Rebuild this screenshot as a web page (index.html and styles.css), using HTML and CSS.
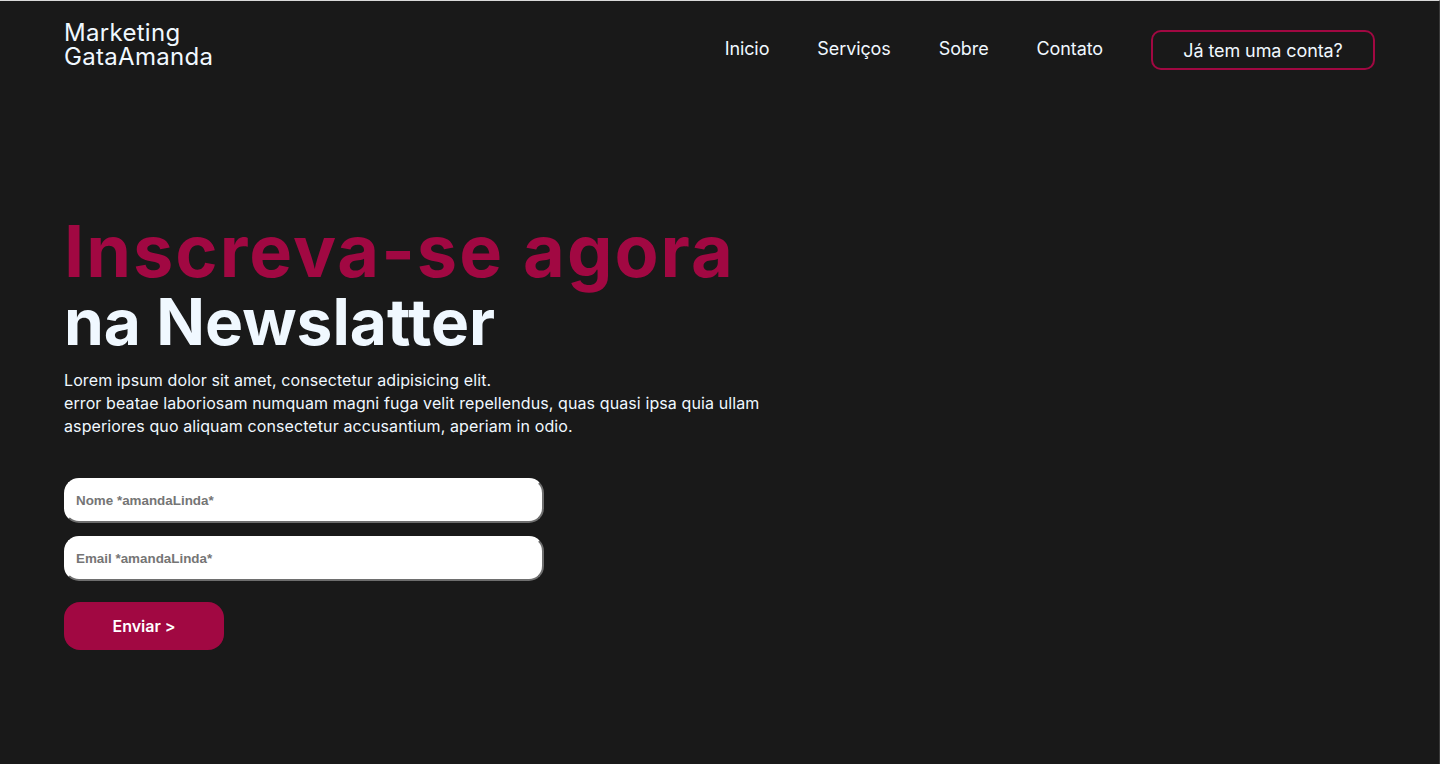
FILE: index.html
```html
<!DOCTYPE html>
<html lang="pt-BR">
<head>
<meta charset="utf-8">
<title>Marketing GataAmanda</title>
<link rel="stylesheet" href="styles.css">
</head>
<body>
<div class="page">
  <header class="header">
    <div class="logo">Marketing<br>GataAmanda</div>
    <nav class="nav">
      <a href="#" class="nav-link">Inicio</a>
      <a href="#" class="nav-link">Serviços</a>
      <a href="#" class="nav-link">Sobre</a>
      <a href="#" class="nav-link">Contato</a>
      <a href="#" class="nav-btn">Já tem uma conta?</a>
    </nav>
  </header>
  <main class="hero">
    <h1 class="title"><span class="title-accent">Inscreva-se agora</span><span class="title-light">na Newslatter</span></h1>
    <p class="lead">Lorem ipsum dolor sit amet, consectetur adipisicing elit.<br>error beatae laboriosam numquam magni fuga velit repellendus, quas quasi ipsa quia ullam asperiores quo aliquam consectetur accusantium, aperiam in odio.</p>
    <form class="form">
      <input class="field" type="text" placeholder="Nome *amandaLinda*">
      <input class="field" type="email" placeholder="Email *amandaLinda*">
      <button class="submit" type="button">Enviar &gt;</button>
    </form>
  </main>
</div>
</body>
</html>
```

FILE: styles.css
```css
* { box-sizing: border-box; }
html, body { margin: 0; padding: 0; }
body {
  background: #191919;
  color: #f0f8ff;
  font-family: Inter, "Noto Sans", sans-serif;
}
.page {
  height: 764px;
  border-top: 1px solid #d9d9d9;
  border-right: 1px solid #3a3a3a;
  overflow: hidden;
}
.header {
  display: flex;
  justify-content: space-between;
  align-items: center;
  padding: 19px 64px 0 64px;
}
.logo {
  font-size: 24px;
  line-height: 24px;
  font-weight: 400;
  letter-spacing: 0.3px;
  color: #f0f8ff;
}
.nav {
  display: flex;
  align-items: center;
  gap: 48px;
  padding-top: 10px;
}
.nav-link {
  color: #f0f8ff;
  text-decoration: none;
  font-size: 18px;
  letter-spacing: -0.1px;
  margin-top: -4px;
}
.nav-btn {
  display: flex;
  align-items: center;
  justify-content: center;
  width: 224px;
  height: 40px;
  border: 2px solid #a10842;
  border-radius: 10px;
  color: #f0f8ff;
  text-decoration: none;
  font-size: 18px;
  letter-spacing: -0.1px;
}
.hero {
  padding: 143px 64px 0 64px;
}
.title {
  margin: 0;
  display: flex;
  flex-direction: column;
  align-items: flex-start;
  font-family: Inter, "Noto Sans", sans-serif;
  font-weight: 700;
}
.title-accent {
  color: #a10842;
  font-size: 72px;
  line-height: 76px;
  letter-spacing: 2px;
}
.title-light {
  color: #f0f8ff;
  font-size: 64px;
  line-height: 66px;
  letter-spacing: 0px;
}
.lead {
  margin: 14px 0 0 0;
  max-width: 720px;
  font-size: 16px;
  line-height: 23px;
  letter-spacing: 0.1px;
  color: #f0f8ff;
}
.form {
  display: flex;
  flex-direction: column;
  align-items: flex-start;
  gap: 13px;
  margin-top: 40px;
}
.field {
  width: 480px;
  height: 45px;
  border-radius: 15px;
  border-style: solid;
  border-width: 2px;
  border-color: #ffffff #6e6e6e #6e6e6e #ffffff;
  background: #ffffff;
  padding: 0 10px;
  font-family: "Liberation Sans", Arial, sans-serif;
  font-weight: 700;
  font-size: 13.4px;
  color: #333;
  outline: none;
}
.field::placeholder { color: #757575; }
.submit {
  margin-top: 8px;
  width: 160px;
  height: 48px;
  border: none;
  border-radius: 16px;
  background: #a10842;
  color: #ffffff;
  font-family: Inter, "Noto Sans", sans-serif;
  font-weight: 600;
  font-size: 16px;
  cursor: pointer;
}
```
